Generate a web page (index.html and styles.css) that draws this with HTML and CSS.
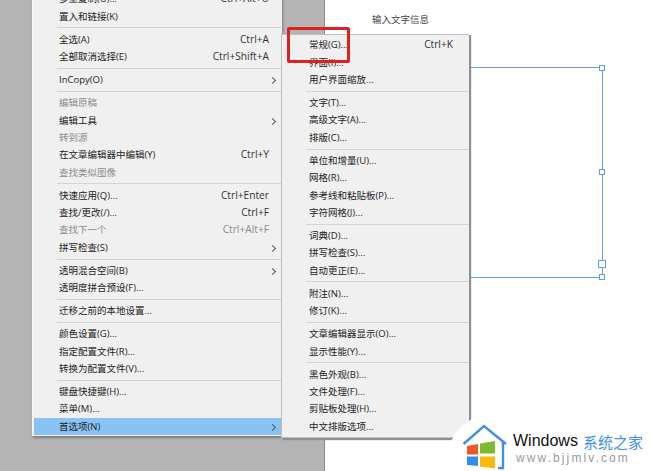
FILE: index.html
```html
<!DOCTYPE html>
<html lang="zh">
<head>
<meta charset="utf-8">
<title>首选项</title>
<link rel="stylesheet" href="styles.css">
</head>
<body>
<div class="stage">
  <div class="desk"></div>
  <div class="page">
    <p class="caption">输入文字信息</p>
    <div class="frame">
      <i class="handle h-tm"></i><i class="handle h-tr"></i><i class="handle h-mr"></i>
      <i class="handle h-bm"></i><i class="handle h-br"></i><i class="handle big"></i>
    </div>
  </div>

  <div class="menu main">
    <div class="row"><span class="label">多重复制(U)...</span><span class="key">Ctrl+Alt+U</span></div>
    <div class="row"><span class="label">置入和链接(K)</span></div>
    <hr>
    <div class="row"><span class="label">全选(A)</span><span class="key">Ctrl+A</span></div>
    <div class="row"><span class="label">全部取消选择(E)</span><span class="key">Ctrl+Shift+A</span></div>
    <hr>
    <div class="row sub"><span class="label">InCopy(O)</span></div>
    <hr>
    <div class="row off"><span class="label">编辑原稿</span></div>
    <div class="row sub"><span class="label">编辑工具</span></div>
    <div class="row off"><span class="label">转到源</span></div>
    <div class="row"><span class="label">在文章编辑器中编辑(Y)</span><span class="key">Ctrl+Y</span></div>
    <div class="row off"><span class="label">查找类似图像</span></div>
    <hr>
    <div class="row"><span class="label">快速应用(Q)...</span><span class="key">Ctrl+Enter</span></div>
    <div class="row"><span class="label">查找/更改(/)...</span><span class="key">Ctrl+F</span></div>
    <div class="row off"><span class="label">查找下一个</span><span class="key">Ctrl+Alt+F</span></div>
    <div class="row sub"><span class="label">拼写检查(S)</span></div>
    <hr>
    <div class="row sub"><span class="label">透明混合空间(B)</span></div>
    <div class="row"><span class="label">透明度拼合预设(F)...</span></div>
    <hr>
    <div class="row"><span class="label">迁移之前的本地设置...</span></div>
    <hr>
    <div class="row"><span class="label">颜色设置(G)...</span></div>
    <div class="row"><span class="label">指定配置文件(R)...</span></div>
    <div class="row"><span class="label">转换为配置文件(V)...</span></div>
    <hr>
    <div class="row"><span class="label">键盘快捷键(H)...</span></div>
    <div class="row"><span class="label">菜单(M)...</span></div>
    <div class="row sub active"><span class="label">首选项(N)</span></div>
  </div>

  <div class="menu second">
    <div class="row"><span class="label">常规(G)...</span><span class="key">Ctrl+K</span></div>
    <div class="row"><span class="label">界面(I)...</span></div>
    <div class="row"><span class="label">用户界面缩放...</span></div>
    <hr>
    <div class="row"><span class="label">文字(T)...</span></div>
    <div class="row"><span class="label">高级文字(A)...</span></div>
    <div class="row"><span class="label">排版(C)...</span></div>
    <hr>
    <div class="row"><span class="label">单位和增量(U)...</span></div>
    <div class="row"><span class="label">网格(R)...</span></div>
    <div class="row"><span class="label">参考线和粘贴板(P)...</span></div>
    <div class="row"><span class="label">字符网格(J)...</span></div>
    <hr>
    <div class="row"><span class="label">词典(D)...</span></div>
    <div class="row"><span class="label">拼写检查(S)...</span></div>
    <div class="row"><span class="label">自动更正(E)...</span></div>
    <hr>
    <div class="row"><span class="label">附注(N)...</span></div>
    <div class="row"><span class="label">修订(K)...</span></div>
    <hr>
    <div class="row"><span class="label">文章编辑器显示(O)...</span></div>
    <div class="row"><span class="label">显示性能(Y)...</span></div>
    <hr>
    <div class="row"><span class="label">黑色外观(B)...</span></div>
    <div class="row"><span class="label">文件处理(F)...</span></div>
    <div class="row"><span class="label">剪贴板处理(H)...</span></div>
    <div class="row"><span class="label">中文排版选项...</span></div>
  </div>

  <div class="callout"></div>

  <div class="mark">
    <svg class="logo" viewBox="0 0 50 50" width="50" height="50" aria-hidden="true">
      <path d="M1.5 21 22 3 44 21" fill="none" stroke="#3f8fe8" stroke-width="2.4"/>
      <path d="M41 19V45H36" fill="none" stroke="#3f8fe8" stroke-width="2.4"/>
      <path d="M5 23 16 21V31.500H5Z" fill="#f0562a"/>
      <path d="M18 20.500 33 18V30.500H18Z" fill="#7dba2f"/>
      <path d="M5 33.500H16V43L5 42Z" fill="#2f8fea"/>
      <path d="M18 33.500H33V45.500L18 43.500Z" fill="#fbb80f"/>
    </svg>
    <div class="brand">
      <div class="brand-top"><span class="win">Windows</span> <span class="cn">系统之家</span></div>
      <div class="url">www.bjjmlv.com</div>
    </div>
  </div>
</div>
</body>
</html>
```

FILE: styles.css
```css
* { box-sizing: border-box; }
html, body { margin: 0; padding: 0; }
body {
  width: 650px;
  height: 471px;
  overflow: hidden;
  background: #fff;
  font-family: "Open Sans", "Noto Sans CJK SC", sans-serif;
}
.stage {
  position: relative;
  display: flex;
  width: 650px;
  height: 471px;
  overflow: hidden;
}
.desk {
  width: 325px;
  background: #b4b4b4;
  border-right: 1px solid #8a8a8a;
}
.page { flex: 1; background: #fff; position: relative; }
.caption {
  margin: 14px 0 0 47px;
  font-size: 9.500px;
  line-height: 12px;
  color: #444;
}
.frame {
  position: absolute;
  left: -60px;
  top: 67px;
  width: 338px;
  height: 211px;
  border: 1px solid #5f9fdc;
}
.handle {
  position: absolute;
  width: 6px;
  height: 6px;
  background: #fff;
  border: 1px solid #5f9fdc;
}
.h-tm { left: 198px; top: -3px; }
.h-tr { right: -3px; top: -3px; }
.h-mr { right: -3px; top: 101px; }
.h-bm { left: 198px; bottom: -3px; }
.h-br { right: -3px; bottom: -3px; }
.big { right: -4px; bottom: 9px; width: 8px; height: 8px; }

.menu {
  position: absolute;
  background: #f0f0f0;
  color: #222;
  font-size: 9.500px;
}
.main {
  left: 32px;
  top: -9.600px;
  width: 250px;
  padding: 0 1px 1px 1px;
  background: #f0f0f0;
  border-left: 1px solid #fafafa;
  box-shadow: 1px 2px 2px rgba(80, 80, 80, .55);
}
.second {
  left: 281px;
  top: 34px;
  width: 188px;
  padding: 1.300px 0 2px;
  border: 1px solid #bdbdbd;
  border-right: 0;
  box-shadow: 2px 1px 0 #8f8f8f, 2px 2px 1px #8f8f8f;
}
.row {
  display: flex;
  align-items: center;
  height: 17.400px;
  line-height: 17.400px;
  padding: 0 12px 0 25px;
  white-space: nowrap;
}
.second .row { padding: 0 16px 0 27px; }
.label { flex: 1; }
.key { color: #333; font-size: 10.200px; }
.off, .off .key { color: #8c8c8c; }
.sub { position: relative; }
.sub::after {
  content: "";
  position: absolute;
  right: 6px;
  top: 7px;
  width: 4px;
  height: 4px;
  border-top: 1px solid #555;
  border-right: 1px solid #555;
  transform: rotate(45deg);
}
.active { background: #89c3f6; }
hr {
  margin: 2.300px 0 2.300px 23px;
  height: 1px;
  border: 0;
  background: #d4d4d4;
}
.second hr { margin-left: 24px; }

.callout {
  position: absolute;
  left: 287px;
  top: 27px;
  width: 63px;
  height: 36px;
  border: 3px solid #e0201c;
  border-radius: 2px;
}
.mark {
  position: absolute;
  left: 448px;
  top: 415px;
  width: 202px;
  height: 56px;
  display: flex;
  background: radial-gradient(circle 42px at 42px 42px, #fff 99%, transparent 100%);
}
.logo {
  position: absolute;
  left: 14px;
  top: 8px;
}
.brand {
  position: absolute;
  left: 65px;
  top: 16px;
  white-space: nowrap;
}
.brand-top {
  display: flex;
  align-items: center;
  gap: 5px;
  height: 20px;
}
.win {
  font-family: "Liberation Sans", sans-serif;
  font-size: 16px;
  color: #111;
}
.cn {
  font-family: "Noto Sans CJK SC", sans-serif;
  font-size: 15px;
  color: #3f8fe8;
}
.url {
  font-family: "Liberation Sans", sans-serif;
  font-size: 12px;
  line-height: 13px;
  letter-spacing: 2.100px;
  color: #9a9a9a;
  margin-left: 3px;
  margin-top: 1px;
}
```
